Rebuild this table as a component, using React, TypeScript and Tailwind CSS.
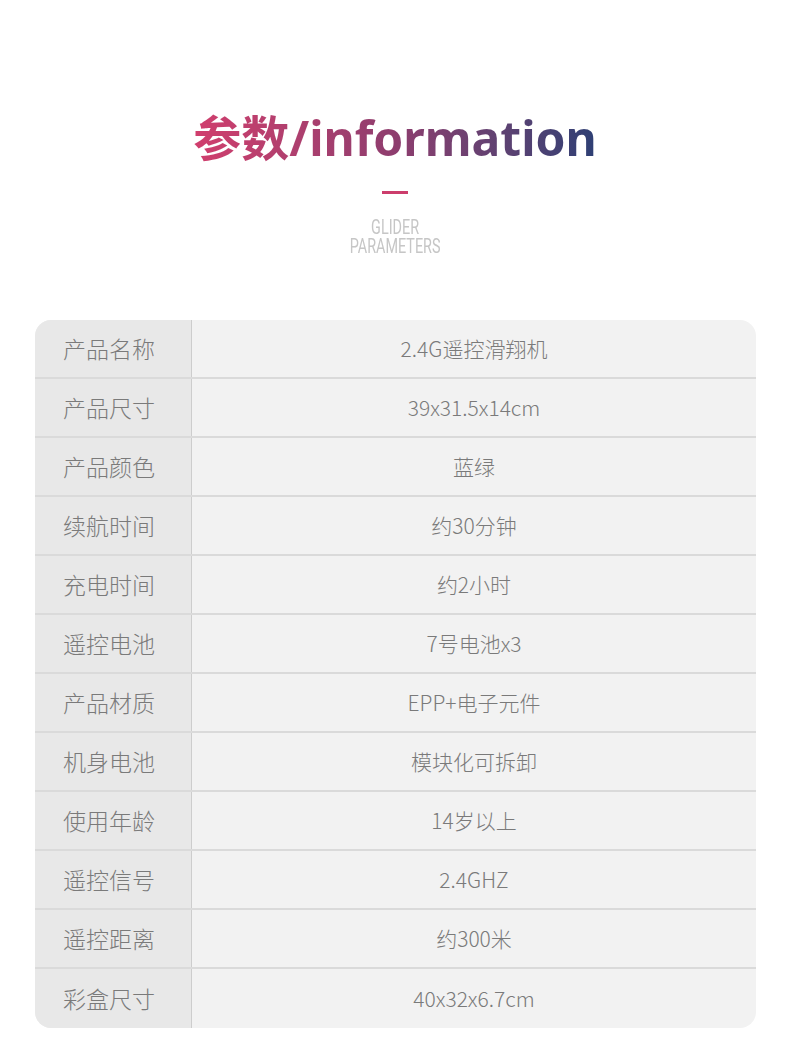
import { FC } from "react";

const rows: [string, string][] = [
  ["产品名称", "2.4G遥控滑翔机"],
  ["产品尺寸", "39x31.5x14cm"],
  ["产品颜色", "蓝绿"],
  ["续航时间", "约30分钟"],
  ["充电时间", "约2小时"],
  ["遥控电池", "7号电池x3"],
  ["产品材质", "EPP+电子元件"],
  ["机身电池", "模块化可拆卸"],
  ["使用年龄", "14岁以上"],
  ["遥控信号", "2.4GHZ"],
  ["遥控距离", "约300米"],
  ["彩盒尺寸", "40x32x6.7cm"],
];

const App: FC = () => {
  return (
    <div
      className="w-[790px] h-[1053px] bg-white overflow-hidden"
      style={{ fontFamily: '"Noto Sans CJK SC", "Noto Sans", sans-serif' }}
    >
      <div className="flex flex-col items-center pt-[106px]">
        <h1
          className="text-[48px] leading-[64px] font-bold bg-linear-to-r from-[#d13e6d] via-[#8e3d6e] to-[#2d3f74] bg-clip-text text-transparent"
          style={{ fontFamily: '"Noto Sans", "Noto Sans CJK SC", sans-serif' }}
        >
          参数/information
        </h1>
        <div className="mt-[21px] w-[26px] h-[3px] bg-[#cc3d6c]" />
        <div
          className="mt-[24px] text-[20px] leading-[19px] text-[#c6c6c6] text-center scale-x-[0.72]"
          style={{ fontFamily: 'Roboto, "Liberation Sans", sans-serif' }}
        >
          <div>GLIDER</div>
          <div>PARAMETERS</div>
        </div>
      </div>

      <div className="mx-[35px] mt-[64px] w-[721px] rounded-[16px] overflow-hidden bg-[#f2f2f2] flex flex-col">
        {rows.map(([k, v], i) => (
          <div
            key={k}
            className={`flex h-[59px] ${i < rows.length - 1 ? "border-b-2 border-[#dadada]" : ""}`}
          >
            <div className="w-[157px] shrink-0 bg-[#e8e8e8] border-r border-[#cdcdcd] flex items-center pl-[28px] text-[23px] font-light text-[#7a7a7a]">
              {k}
            </div>
            <div className="flex-1 flex items-center justify-center text-[21px] font-light text-[#7a7a7a]">
              {v}
            </div>
          </div>
        ))}
      </div>
    </div>
  );
};

export default App;
